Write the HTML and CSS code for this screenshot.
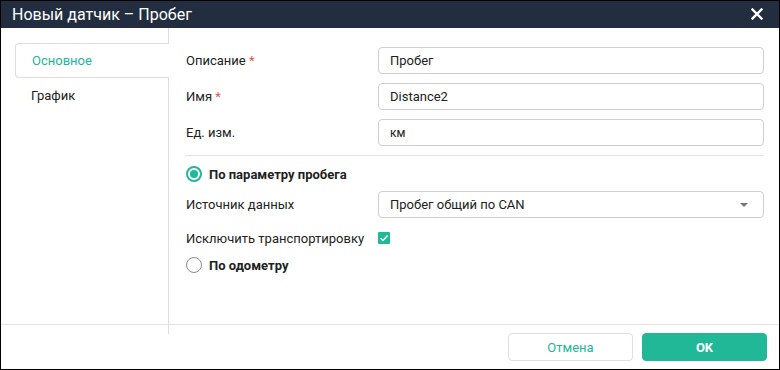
FILE: index.html
```html
<!DOCTYPE html>
<html lang="ru">
<head>
<meta charset="utf-8">
<title>Новый датчик – Пробег</title>
<link rel="stylesheet" href="styles.css">
</head>
<body>
<div class="dialog">
  <div class="titlebar">
    <span class="title">Новый датчик – Пробег</span>
    <svg class="close" width="12" height="12" viewBox="0 0 12 12"><path d="M1.5 1.5 L10.5 10.5 M10.5 1.5 L1.5 10.5" stroke="#fff" stroke-width="2.4" stroke-linecap="square"/></svg>
  </div>
  <div class="main">
    <nav class="tabs">
      <div class="tab active">Основное</div>
      <div class="tab">График</div>
    </nav>
    <div class="content">
      <div class="row">
        <label class="label">Описание <span class="req">*</span></label>
        <div class="input">Пробег</div>
      </div>
      <div class="row">
        <label class="label">Имя <span class="req">*</span></label>
        <div class="input">Distance2</div>
      </div>
      <div class="row">
        <label class="label">Ед. изм.</label>
        <div class="input small">км</div>
      </div>
      <div class="sep"></div>
      <div class="radio-row">
        <span class="radio checked"></span>
        <span class="radio-text">По параметру пробега</span>
      </div>
      <div class="row select-row">
        <label class="label">Источник данных</label>
        <div class="input select">Пробег общий по CAN<span class="caret"></span></div>
      </div>
      <div class="check-row">
        <label class="label">Исключить транспортировку</label>
        <span class="checkbox"><svg width="12" height="12" viewBox="0 0 12 12"><path d="M2.6 6.2 L5 8.5 L9.6 3.6" fill="none" stroke="#fff" stroke-width="1.5"/></svg></span>
      </div>
      <div class="radio-row second">
        <span class="radio"></span>
        <span class="radio-text">По одометру</span>
      </div>
    </div>
  </div>
  <div class="footer">
    <button class="btn cancel">Отмена</button>
    <button class="btn ok">OK</button>
  </div>
</div>
</body>
</html>
```

FILE: styles.css
```css
* { box-sizing: border-box; }
html, body { margin: 0; padding: 0; background: #fff; }
body { font-family: Roboto, "Liberation Sans", Arial, sans-serif; font-size: 13px; color: #222; }

.dialog {
  width: 780px;
  height: 370px;
  border: 1px solid #000;
  display: flex;
  flex-direction: column;
  background: #fff;
}

.titlebar {
  height: 27px;
  flex: none;
  background: #222e3f;
  display: flex;
  align-items: center;
  justify-content: space-between;
  padding: 0 16px 1px 11px;
}
.title { color: #fff; font-size: 16px; }
.close { display: block; }

.main {
  height: 296px;
  flex: none;
  display: flex;
}

.tabs {
  width: 168px;
  height: 306px;
  flex: none;
  border-right: 1px solid #dedede;
  padding: 15px 0 0 14px;
  position: relative;
  z-index: 1;
}
.tab {
  height: 35px;
  display: flex;
  align-items: center;
  padding-left: 16px;
  margin-right: -1px;
  font-size: 13px;
  color: #222;
}
.tab.active {
  color: #21b897;
  background: #fff;
  border: 1px solid #dedede;
  border-right: none;
  border-radius: 4px 0 0 4px;
}

.content {
  flex: 1;
  padding: 19px 15px 0 17px;
  display: flex;
  flex-direction: column;
}

.row {
  display: flex;
  align-items: center;
  height: 27px;
  margin-bottom: 9px;
}
.label {
  width: 192px;
  flex: none;
  color: #222;
}
.req { color: #e8554e; }
.input {
  flex: 1;
  height: 27px;
  border: 1px solid #cfcfcf;
  border-radius: 4px;
  padding: 0 11px;
  display: flex;
  align-items: center;
  color: #222;
}
.input.small { font-size: 12px; }

.sep {
  height: 1px;
  background: #e3e3e3;
  margin: 0 0 10px -1px;
}

.radio-row {
  display: flex;
  align-items: center;
  height: 16px;
  margin-bottom: 9px;
}
.radio-row.second { margin-top: 8px; }
.radio {
  width: 16px;
  height: 16px;
  border-radius: 50%;
  border: 1px solid #8a8a8a;
  margin-right: 7px;
  flex: none;
  position: relative;
}
.radio.checked {
  border: 2px solid #21b897;
}
.radio.checked::after {
  content: "";
  position: absolute;
  left: 2px;
  top: 2px;
  width: 8px;
  height: 8px;
  border-radius: 50%;
  background: #21b897;
}
.radio-text { font-weight: bold; font-size: 13px; color: #222; }

.select-row { margin-bottom: 9px; }
.select { justify-content: space-between; }
.caret {
  width: 0;
  height: 0;
  border-left: 4px solid transparent;
  border-right: 4px solid transparent;
  border-top: 4px solid #777;
  margin-right: 4px;
}

.check-row {
  display: flex;
  align-items: center;
  height: 22px;
}
.checkbox {
  width: 12px;
  height: 12px;
  background: #21b897;
  border-radius: 1px;
  display: block;
}
.checkbox svg { display: block; }

.footer {
  flex: 1;
  border-top: 1px solid #e3e3e3;
  display: flex;
  justify-content: flex-end;
  align-items: flex-start;
  padding: 8px 12px 0 0;
  gap: 9px;
}
.btn {
  width: 125px;
  height: 28px;
  border-radius: 4px;
  font-family: Roboto, "Liberation Sans", Arial, sans-serif;
  font-size: 13px;
  padding: 0;
}
.btn.cancel {
  background: #fff;
  border: 1px solid #e0e0e0;
  color: #21b897;
}
.btn.ok {
  background: #21b897;
  border: 1px solid #21b897;
  color: #fff;
  font-weight: bold;
}
```
